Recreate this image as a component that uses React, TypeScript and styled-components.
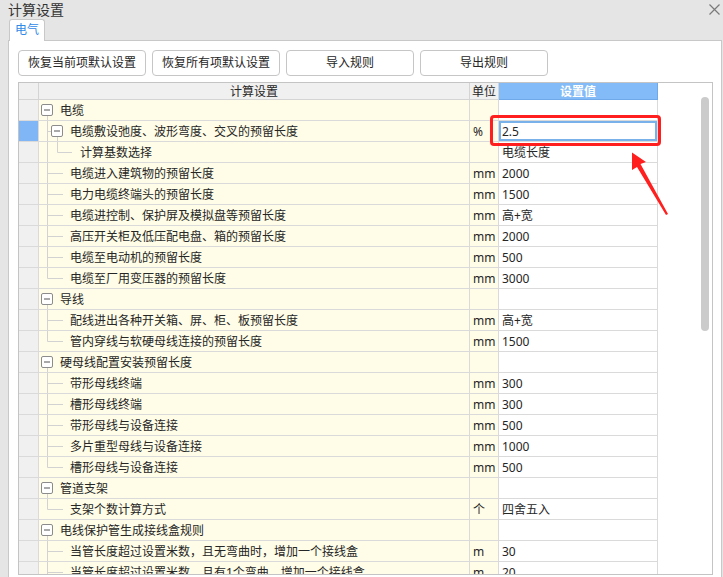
import React from 'react'
import styled, { createGlobalStyle } from 'styled-components'

type GuideKind = 'g0' | 'g1' | 'l1' | 'l1last' | 'l2last'

interface SettingRow {
  label: string
  guide: GuideKind
  unit?: string
  value?: string
  selected?: boolean
}

const rows: SettingRow[] = [
  { label: '电缆', guide: 'g0' },
  { label: '电缆敷设弛度、波形弯度、交叉的预留长度', guide: 'g1', unit: '%', value: '2.5', selected: true },
  { label: '计算基数选择', guide: 'l2last', value: '电缆长度' },
  { label: '电缆进入建筑物的预留长度', guide: 'l1', unit: 'mm', value: '2000' },
  { label: '电力电缆终端头的预留长度', guide: 'l1', unit: 'mm', value: '1500' },
  { label: '电缆进控制、保护屏及模拟盘等预留长度', guide: 'l1', unit: 'mm', value: '高+宽' },
  { label: '高压开关柜及低压配电盘、箱的预留长度', guide: 'l1', unit: 'mm', value: '2000' },
  { label: '电缆至电动机的预留长度', guide: 'l1', unit: 'mm', value: '500' },
  { label: '电缆至厂用变压器的预留长度', guide: 'l1last', unit: 'mm', value: '3000' },
  { label: '导线', guide: 'g0' },
  { label: '配线进出各种开关箱、屏、柜、板预留长度', guide: 'l1', unit: 'mm', value: '高+宽' },
  { label: '管内穿线与软硬母线连接的预留长度', guide: 'l1last', unit: 'mm', value: '1500' },
  { label: '硬母线配置安装预留长度', guide: 'g0' },
  { label: '带形母线终端', guide: 'l1', unit: 'mm', value: '300' },
  { label: '槽形母线终端', guide: 'l1', unit: 'mm', value: '300' },
  { label: '带形母线与设备连接', guide: 'l1', unit: 'mm', value: '500' },
  { label: '多片重型母线与设备连接', guide: 'l1', unit: 'mm', value: '1000' },
  { label: '槽形母线与设备连接', guide: 'l1last', unit: 'mm', value: '500' },
  { label: '管道支架', guide: 'g0' },
  { label: '支架个数计算方式', guide: 'l1last', unit: '个', value: '四舍五入' },
  { label: '电线保护管生成接线盒规则', guide: 'g0' },
  { label: '当管长度超过设置米数，且无弯曲时，增加一个接线盒', guide: 'l1', unit: 'm', value: '30' },
  { label: '当管长度超过设置米数，且有1个弯曲，增加一个接线盒', guide: 'l1', unit: 'm', value: '20' }
]

const guideWidth: Record<GuideKind, number> = { g0: 21, g1: 31, l1: 31, l1last: 31, l2last: 41 }

const LINE = '#d2d2d2'
const BOX = '#8c8c8c'

// minus box of an expanded node
const ToggleBox = ({ x }: { x: number }) => (
  <>
    <rect x={x + 0.5} y={4.5} width={11} height={11} rx={1.5} fill="#fff" stroke={BOX} />
    <line x1={x + 3} y1={10} x2={x + 9} y2={10} stroke="#555" />
  </>
)

const TreeGuide = ({ kind }: { kind: GuideKind }) => {
  const w = guideWidth[kind]
  return (
    <GuideSvg width={w} height={20} viewBox={`0 0 ${w} 20`}>
      {kind === 'g0' && (
        <>
          <ToggleBox x={2} />
          <line x1={8.5} y1={16} x2={8.5} y2={20} stroke={LINE} />
        </>
      )}
      {kind === 'g1' && (
        <>
          <line x1={8.5} y1={0} x2={8.5} y2={20} stroke={LINE} />
          <line x1={8.5} y1={10.5} x2={12} y2={10.5} stroke={LINE} />
          <ToggleBox x={12} />
          <line x1={18.5} y1={16} x2={18.5} y2={20} stroke={LINE} />
        </>
      )}
      {kind === 'l2last' && (
        <>
          <line x1={8.5} y1={0} x2={8.5} y2={20} stroke={LINE} />
          <line x1={18.5} y1={0} x2={18.5} y2={10.5} stroke={LINE} />
          <line x1={18.5} y1={10.5} x2={33} y2={10.5} stroke={LINE} />
        </>
      )}
      {(kind === 'l1' || kind === 'l1last') && (
        <>
          <line x1={8.5} y1={0} x2={8.5} y2={kind === 'l1' ? 20 : 10.5} stroke={LINE} />
          <line x1={8.5} y1={10.5} x2={24} y2={10.5} stroke={LINE} />
        </>
      )}
    </GuideSvg>
  )
}

const CloseIcon = () => (
  <svg width="11" height="11" viewBox="0 0 11 11">
    <path d="M0.5 0.5 L10.5 10.5 M10.5 0.5 L0.5 10.5" stroke="#7a7a7a" strokeWidth="1.2" fill="none" />
  </svg>
)

export default function App() {
  return (
    <>
      <GlobalStyle />
      <Window>
        <TitleBar>
          <Title>计算设置</Title>
          <CloseIcon />
        </TitleBar>
        <TabStrip>
          <Tab>电气</Tab>
        </TabStrip>
        <Panel>
          <ButtonRow>
            <ActionButton>恢复当前项默认设置</ActionButton>
            <ActionButton>恢复所有项默认设置</ActionButton>
            <ActionButton>导入规则</ActionButton>
            <ActionButton>导出规则</ActionButton>
          </ButtonRow>
          <TableFrame>
            <Grid>
              <HeaderRow>
                <HeadCell />
                <HeadCell>计算设置</HeadCell>
                <HeadCell>单位</HeadCell>
                <HeadCell $active>设置值</HeadCell>
              </HeaderRow>
              {rows.map((row, i) => (
                <Row key={i}>
                  <RowHead $selected={row.selected} />
                  <NameCell>
                    <TreeGuide kind={row.guide} />
                    <CellText>{row.label}</CellText>
                  </NameCell>
                  <UnitCell>{row.unit}</UnitCell>
                  <ValueCell $editing={row.selected}>{row.value}</ValueCell>
                </Row>
              ))}
            </Grid>
            <ScrollArea>
              <ScrollThumb />
            </ScrollArea>
          </TableFrame>
        </Panel>
        <Highlight />
        <Arrow width="50" height="72" viewBox="0 0 50 72">
          <polygon
            points="7,4.5 21,14 15.5,16 43,66 41,67 12,19 7,22"
            fill="#ff1f1f"
          />
        </Arrow>
      </Window>
    </>
  )
}

const GlobalStyle = createGlobalStyle`
  html, body {
    margin: 0;
    padding: 0;
    background: #e5e5e5;
  }
  body {
    font-family: "Noto Sans", "Noto Sans CJK SC", sans-serif;
    color: #262626;
  }
`

const Window = styled.div`
  position: relative;
  width: 723px;
  height: 577px;
  overflow: hidden;
  display: flex;
  flex-direction: column;
  background: #e5e5e5;
`

const TitleBar = styled.div`
  height: 19px;
  flex: none;
  display: flex;
  align-items: center;
  justify-content: space-between;
  padding: 0 3px 0 8px;
`

const Title = styled.span`
  font-size: 14px;
  line-height: 20px;
  color: #333;
`

const TabStrip = styled.div`
  height: 21px;
  flex: none;
  display: flex;
  align-items: flex-start;
  padding-left: 9px;
`

const Tab = styled.div`
  position: relative;
  z-index: 1;
  box-sizing: border-box;
  width: 36px;
  height: 22px;
  padding-left: 5px;
  border: 1px solid #c8c8c8;
  border-bottom: none;
  border-radius: 3px 3px 0 0;
  background: #fff;
  color: #2f8ae8;
  font-size: 12px;
  line-height: 20px;
`

const Panel = styled.div`
  flex: 1;
  min-height: 0;
  margin: 0 1px 0 8px;
  padding: 9px 8px 0 9px;
  border: 1px solid #c8c8c8;
  border-bottom: none;
  background: #fff;
  display: flex;
  flex-direction: column;
  gap: 6px;
`

const ButtonRow = styled.div`
  display: flex;
  gap: 6px;
`

const ActionButton = styled.button`
  box-sizing: border-box;
  width: 128px;
  height: 26px;
  padding: 0;
  border: 1px solid #c6c6c6;
  border-radius: 4px;
  background: #fff;
  color: #262626;
  font-family: inherit;
  font-size: 12px;
  line-height: 24px;
`

const TableFrame = styled.div`
  box-sizing: border-box;
  height: 493px;
  flex: none;
  display: flex;
  border: 1px solid #c4c4c4;
  overflow: hidden;
`

const Grid = styled.div`
  width: 639px;
  flex: none;
  display: flex;
  flex-direction: column;
`

const columns = '20px 431px 29px 159px'

const HeaderRow = styled.div`
  display: grid;
  grid-template-columns: ${columns};
  height: 17px;
  flex: none;
`

const HeadCell = styled.div<{ $active?: boolean }>`
  box-sizing: border-box;
  border-right: 1px solid ${(p) => (p.$active ? '#6fa9ea' : '#d4d4d4')};
  border-bottom: 1px solid ${(p) => (p.$active ? '#6fa9ea' : '#d4d4d4')};
  background: ${(p) => (p.$active ? '#82bbf7' : '#f0f0f0')};
  color: ${(p) => (p.$active ? '#fff' : '#262626')};
  font-weight: ${(p) => (p.$active ? 700 : 400)};
  font-size: 12px;
  line-height: 17px;
  text-align: center;
  white-space: nowrap;
  overflow: hidden;
`

const Row = styled.div`
  display: grid;
  grid-template-columns: ${columns};
  height: 21px;
  flex: none;
`

const BodyCell = styled.div`
  box-sizing: border-box;
  border-right: 1px solid #dadada;
  border-bottom: 1px solid #dadada;
  font-size: 12px;
  line-height: 22px;
  white-space: nowrap;
  overflow: hidden;
`

const RowHead = styled(BodyCell)<{ $selected?: boolean }>`
  background: ${(p) => (p.$selected ? '#80b6f5' : '#f0f0f0')};
`

const NameCell = styled(BodyCell)`
  display: flex;
  align-items: center;
  background: #fffde7;
`

const GuideSvg = styled.svg`
  flex: none;
  display: block;
`

const CellText = styled.span`
  line-height: 20px;
  padding-top: 2px;
`

const UnitCell = styled(BodyCell)`
  padding-left: 3px;
  background: #fffde7;
`

const ValueCell = styled(BodyCell)<{ $editing?: boolean }>`
  padding-left: 3px;
  background: #fff;
  box-shadow: ${(p) => (p.$editing ? 'inset 0 0 0 2px #79b1ea' : 'none')};
`

const ScrollArea = styled.div`
  flex: 1;
  display: flex;
  justify-content: flex-end;
  padding: 14px 3px 0 0;
  background: #fff;
`

const ScrollThumb = styled.div`
  width: 8px;
  height: 234px;
  border-radius: 4px;
  background: #cbcbcb;
`

const Highlight = styled.div`
  position: absolute;
  left: 490px;
  top: 115px;
  width: 171px;
  height: 31px;
  box-sizing: border-box;
  border: 3px solid #ff1f1f;
  border-radius: 4px;
  pointer-events: none;
`

const Arrow = styled.svg`
  position: absolute;
  left: 625px;
  top: 148px;
  pointer-events: none;
`
